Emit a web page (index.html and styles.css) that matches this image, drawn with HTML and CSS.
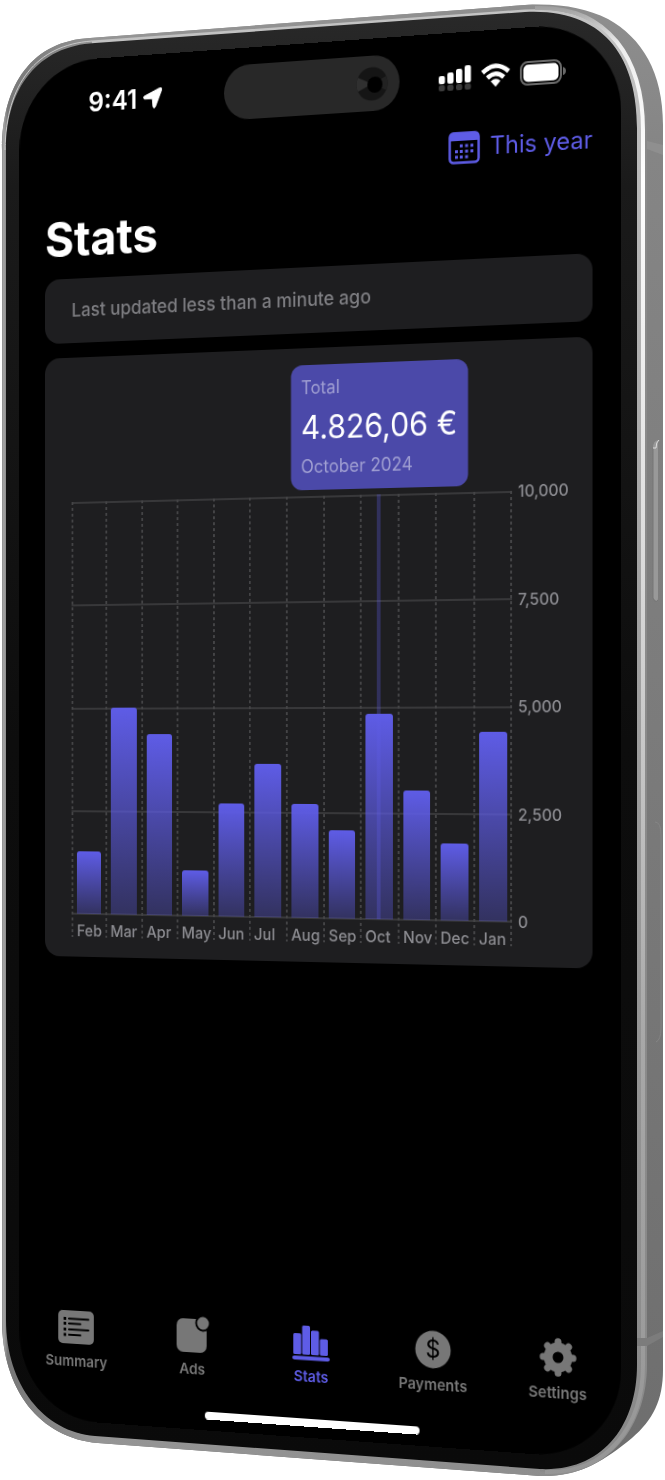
FILE: index.html
```html
<!DOCTYPE html>
<html lang="en">

<head>
    <meta charset="UTF-8">
    <meta name="viewport" content="width=device-width, initial-scale=1.0">
    <title>Stats</title>
    <link rel="stylesheet" href="styles.css">
</head>

<body>
    <div class="phone">
        <svg class="frame" viewBox="0 0 665 1480" preserveAspectRatio="none" aria-hidden="true">
            <defs>
                <linearGradient id="side" x1="0" y1="0" x2="0" y2="1">
                    <stop offset="0" stop-color="#8e8e8e" />
                    <stop offset=".1" stop-color="#858585" />
                    <stop offset="1" stop-color="#6e6e6e" />
                </linearGradient>
                <linearGradient id="metal" gradientUnits="userSpaceOnUse" x1="0" y1="0" x2="647" y2="0">
                    <stop offset="0" stop-color="#777" />
                    <stop offset=".006" stop-color="#a5a5a5" />
                    <stop offset=".012" stop-color="#777" />
                    <stop offset=".15" stop-color="#959595" />
                    <stop offset=".98" stop-color="#8c8c8c" />
                    <stop offset="1" stop-color="#8a8a8a" />
                </linearGradient>
                <linearGradient id="shine" gradientUnits="userSpaceOnUse" x1="0" y1="0" x2="0" y2="1480">
                    <stop offset="0" stop-color="#909090" />
                    <stop offset=".03" stop-color="#eeeeee" />
                    <stop offset=".12" stop-color="#ffffff" />
                    <stop offset=".4" stop-color="#d8d8d8" />
                    <stop offset=".7" stop-color="#a8a8a8" />
                    <stop offset="1" stop-color="#969696" />
                </linearGradient>
                <linearGradient id="lip" gradientUnits="userSpaceOnUse" x1="0" y1="0" x2="0" y2="1480">
                    <stop offset="0" stop-color="#c4c4c4" />
                    <stop offset=".4" stop-color="#a2a2a2" />
                    <stop offset="1" stop-color="#888888" />
                </linearGradient>
                <linearGradient id="glass" x1="0" y1="0" x2="0" y2="1">
                    <stop offset="0" stop-color="#292929" />
                    <stop offset=".12" stop-color="#1a1a1a" />
                    <stop offset=".5" stop-color="#0d0d0d" />
                    <stop offset="1" stop-color="#0a0a0a" />
                </linearGradient>
            </defs>
            <!-- body with the thick right side -->
            <path fill="url(#side)" d="M2 150C2 82 34 41 90 38L525 5C560 3 585 8 608 19C642 38 663 72 663 125V1370C663 1400 653 1420 632 1438C605 1460 580 1477 540 1476L98 1443C40 1438 2 1390 2 1320Z" />
            <!-- front rim -->
            <path fill="url(#metal)" d="M2 150C2 82 34 41 90 38L525 5C611 1 647 60 647 130V1365C647 1425 610 1478 540 1476L98 1443C40 1438 2 1390 2 1320Z" />
            <path fill="none" stroke="url(#lip)" stroke-width="5" d="M92 43L525 12C607 7 639 58 639 128V1365C639 1425 606 1472 540 1469" />
            <path fill="none" stroke="url(#shine)" stroke-width="4" d="M535 8C609 5 643 60 643 130V1365C643 1425 608 1474 545 1472" />
            <path fill="none" stroke="#c8c8c8" stroke-width="1" d="M5 150C6 84 36 45 92 41" />
            <path fill="url(#glass)" d="M6 150C6 88 38 46 95 43L525 12C605 8 637 58 637 128V1365C637 1424 604 1472 540 1469L95 1436C44 1432 6 1385 6 1320Z" />
            <!-- antenna bands and side buttons -->
            <path fill="#8f8f8f" d="M647 141L663 145V155L647 149Z" />
            <path fill="#7c7c7c" d="M637 1338H647L663 1331V1337L647 1346H637Z" />
            <path fill="#999" d="M653 448Q653 441 658 440V598Q658 604 653 598Z" />
            <path fill="none" stroke="#777" d="M653 448V598Q655 604 658 600" />
            <path fill="none" stroke="#ddd" d="M653 448H656Q656 442 659 440" />
            <path fill="none" stroke="#858585" d="M655 822Q661 822 661 835V1028Q661 1040 656 1042" />
        </svg>

        <div class="screen">
            <div class="status-bar">
                <div class="clock">
                    <span>9:41</span>
                    <svg width="21" height="21" viewBox="0 0 21 21"><path fill="#fff" d="M18.500 .4Q20.800 -.3 20.600 2.500L13.500 19.500Q12.300 21.500 11 19.500L10.300 11.800Q10.100 11 9.300 10.900L1.500 10.800Q-.6 9.500 1.200 8Z" stroke="#fff" stroke-width="1" stroke-linejoin="round" /></svg>
                </div>
                <div class="island">
                    <svg width="34" height="36" viewBox="0 0 34 36">
                        <circle cx="17" cy="18" r="16.500" fill="#151515" />
                        <path d="M17 18L2 11A17 17 0 0 0 2 25Z" fill="#303030" />
                        <path d="M17 18L32 11A17 17 0 0 1 32 25Z" fill="#222222" />
                        <circle cx="20" cy="19" r="8" fill="#000" />
                    </svg>
                </div>
                <div class="indicators">
                    <svg width="34" height="27" viewBox="0 0 34 27">
                        <g fill="#fff">
                            <rect x="0" y="11" width="6.500" height="8" rx="2" />
                            <rect x="9" y="8" width="6.500" height="11" rx="2" />
                            <rect x="18" y="5" width="6.500" height="14" rx="2" />
                            <rect x="27" y="2" width="6.500" height="17" rx="2" />
                        </g>
                        <g fill="#3c3c3c">
                            <rect x="0" y="20" width="6.500" height="6" rx="2" />
                            <rect x="9" y="20" width="6.500" height="6" rx="2" />
                            <rect x="18" y="20" width="6.500" height="6" rx="2" />
                            <rect x="27" y="20" width="6.500" height="6" rx="2" />
                        </g>
                    </svg>
                    <svg width="30" height="23" viewBox="0 0 30 23">
                        <g fill="none" stroke="#fff" stroke-width="4.500">
                            <path d="M1.500 8.500Q15-3.500 28.500 8.500" />
                            <path d="M6.500 14Q15 6.500 23.500 14" />
                        </g>
                        <path fill="#fff" d="M10 17.500Q15 13 20 17.500L15 23Z" />
                    </svg>
                    <svg width="47" height="24" viewBox="0 0 47 24">
                        <rect x="1" y="1" width="41" height="22" rx="7" fill="none" stroke="#6a6a6a" stroke-width="2" />
                        <rect x="3.500" y="3.500" width="36" height="17" rx="5" fill="#fff" />
                        <path d="M44 8Q47 9 47 12T44 16Z" fill="#6a6a6a" />
                    </svg>
                </div>
            </div>

            <header class="toolbar">
                <button class="period" type="button">
                    <svg width="33" height="32" viewBox="0 0 33 32">
                        <rect x="1.500" y="1.500" width="30" height="29" rx="4" fill="none" stroke="#5e5ce6" stroke-width="2.500" />
                        <path d="M1 9V5Q1 .5 5 .5H28Q32 .5 32 5V9Z" fill="#5e5ce6" />
                        <g fill="#5e5ce6">
                            <path d="M12 12.500h3v3h-3zM17.500 12.500h3v3h-3zM23 12.500h3v3h-3z" />
                            <path d="M7 18h3v3h-3zM12 18h3v3h-3zM17.500 18h3v3h-3zM23 18h3v3h-3z" />
                            <path d="M7 23.500h3v3h-3zM12 23.500h3v3h-3zM17.500 23.500h3v3h-3z" />
                        </g>
                    </svg>
                    This year
                </button>
            </header>

            <main>
                <h1>Stats</h1>
                <p class="card updated">Last updated less than a minute ago</p>

                <section class="card chart">
                    <div class="plot">
                        <div class="lines"><i></i><i></i><i></i><i></i><i></i></div>
                        <div class="months">
                            <div class="month"><div class="track"><div class="bar" style="height: 15.2%"></div></div><span>Feb</span></div>
                            <div class="month"><div class="track"><div class="bar" style="height: 49.9%"></div></div><span>Mar</span></div>
                            <div class="month"><div class="track"><div class="bar" style="height: 43.6%"></div></div><span>Apr</span></div>
                            <div class="month"><div class="track"><div class="bar" style="height: 10.9%"></div></div><span>May</span></div>
                            <div class="month"><div class="track"><div class="bar" style="height: 27.1%"></div></div><span>Jun</span></div>
                            <div class="month"><div class="track"><div class="bar" style="height: 36.5%"></div></div><span>Jul</span></div>
                            <div class="month"><div class="track"><div class="bar" style="height: 27%"></div></div><span>Aug</span></div>
                            <div class="month"><div class="track"><div class="bar" style="height: 20.8%"></div></div><span>Sep</span></div>
                            <div class="month selected">
                                <div class="track"><div class="bar" style="height: 48.3%"></div></div><span>Oct</span>
                                <div class="tooltip">
                                    <small>Total</small>
                                    <strong>4.826,06 €</strong>
                                    <small>October 2024</small>
                                </div>
                            </div>
                            <div class="month"><div class="track"><div class="bar" style="height: 30.3%"></div></div><span>Nov</span></div>
                            <div class="month"><div class="track"><div class="bar" style="height: 17.9%"></div></div><span>Dec</span></div>
                            <div class="month"><div class="track"><div class="bar" style="height: 44%"></div></div><span>Jan</span></div>
                        </div>
                    </div>
                    <div class="scale">
                        <span>10,000</span>
                        <span>7,500</span>
                        <span>5,000</span>
                        <span>2,500</span>
                        <span>0</span>
                    </div>
                </section>
            </main>

            <nav class="tabs">
                <a href="#summary">
                    <svg width="42" height="38" viewBox="0 0 42 38">
                        <rect x="1" y="2" width="40" height="34" rx="5" fill="currentColor" />
                        <path d="M13 10.500H35M13 15.500H26M13 21.500H35M13 27H26" stroke="#000" stroke-width="2" stroke-linecap="round" />
                        <path d="M7 10.500h3M7 15.500h3M7 21.500h3M7 27h3" stroke="#000" stroke-width="3" />
                    </svg>
                    Summary
                </a>
                <a href="#ads">
                    <svg width="42" height="38" viewBox="0 0 42 38">
                        <rect x="4" y="3" width="33" height="34" rx="7" fill="currentColor" />
                        <circle cx="33" cy="7" r="7.500" fill="currentColor" stroke="#000" stroke-width="2" />
                    </svg>
                    Ads
                </a>
                <a href="#stats" class="active">
                    <svg width="42" height="38" viewBox="0 0 42 38">
                        <g fill="currentColor">
                            <rect x="2" y="11" width="8.500" height="21" rx="1.500" />
                            <rect x="11.500" y="3" width="8.500" height="29" rx="1.500" />
                            <rect x="21" y="7.500" width="8.500" height="24.500" rx="1.500" />
                            <rect x="30.500" y="15.500" width="8.500" height="16.500" rx="1.500" />
                            <rect x="1" y="33.500" width="40" height="4" rx="2" />
                        </g>
                    </svg>
                    Stats
                </a>
                <a href="#payments">
                    <svg width="42" height="38" viewBox="0 0 42 38">
                        <circle cx="21" cy="19" r="18.500" fill="currentColor" />
                        <text x="21" y="27" text-anchor="middle" class="dollar">$</text>
                    </svg>
                    Payments
                </a>
                <a href="#settings">
                    <svg width="42" height="38" viewBox="0 0 42 38">
                        <circle cx="21" cy="19" r="10" fill="none" stroke="currentColor" stroke-width="9" />
                        <g stroke="currentColor" stroke-width="7" stroke-linecap="round">
                            <path d="M21 7V3.800M21 31V34.200M9 19H5.800M33 19H36.200M12.500 10.500L10.300 8.300M29.500 10.500L31.700 8.300M12.500 27.500L10.300 29.700M29.500 27.500L31.700 29.700" />
                        </g>
                    </svg>
                    Settings
                </a>
            </nav>
            <div class="home-bar"></div>
        </div>
    </div>
</body>

</html>
```
FILE: styles.css
```css
* {
    box-sizing: border-box;
}

body {
    font-family: Inter, "Liberation Sans", sans-serif;
    background-color: #ffffff;
    margin: 0;
}

.phone {
    position: relative;
    display: flex;
    max-width: 720px;
    min-height: 100vh;
    margin: 0 auto;
    padding: 43px 0 42px;
    overflow: hidden;
}

.frame {
    position: absolute;
    inset: 0;
    width: 100%;
    height: 100%;
}

/* the device stands turned to the left, right edge nearer */
.screen {
    flex: 1;
    display: flex;
    flex-direction: column;
    min-width: 0;
    margin: 0 32px 0 -11px;
    padding: 17px 0 11px;
    border-radius: 88px;
    background: #000;
    color: #fff;
    transform: perspective(3700px) rotateY(-21deg);
}

.status-bar {
    display: grid;
    grid-template-columns: 1fr 188px 1fr;
    align-items: center;
}

.clock {
    display: flex;
    align-items: center;
    gap: 7px;
    padding-left: 78px;
    font-size: 27px;
    font-weight: 600;
    line-height: 32px;
}

.island {
    display: flex;
    align-items: center;
    justify-content: flex-end;
    height: 55px;
    padding-right: 12px;
    border-radius: 28px;
    background: #282828;
}

.indicators {
    display: flex;
    align-items: center;
    justify-content: flex-end;
    gap: 10px;
    padding-right: 56px;
}

.toolbar {
    display: flex;
    justify-content: flex-end;
    margin-top: 26px;
    padding: 0 29px;
}

.period {
    display: flex;
    align-items: center;
    gap: 10px;
    padding: 0;
    border: none;
    background: none;
    color: #5e5ce6;
    font-family: inherit;
    font-size: 24px;
    line-height: 32px;
    cursor: pointer;
}

main {
    flex: 1;
    padding: 0 29px;
}

h1 {
    margin: 25px 0 13px;
    font-size: 50px;
    line-height: 56px;
}

.card {
    margin: 0 0 15px;
    border-radius: 16px;
    background: #1e1e20;
}

.updated {
    padding: 20px 30px;
    color: #7e7e82;
    font-size: 19px;
    font-weight: 500;
    line-height: 26px;
}

.chart {
    display: flex;
    align-items: flex-start;
    padding: 148px 0 20px 30px;
    color: #8c8c91;
    font-size: 16px;
    font-weight: 500;
}

.plot {
    flex: 1;
    display: grid;
}

.lines,
.months {
    grid-area: 1 / 1;
}

.lines {
    display: flex;
    flex-direction: column;
    justify-content: space-between;
    height: 423px;
}

.lines i {
    height: 2px;
    background: #38383a;
}

.months {
    display: grid;
    grid-template-columns: 29fr 31fr 30fr 31fr 30fr 31fr 31fr 30fr 31fr 30fr 31fr 31fr;
}

.month {
    position: relative;
    min-width: 0;
    padding: 0 5px 0 6px;
    background: repeating-linear-gradient(#444446 0 3px, transparent 3px 6px) left / 2px 100% no-repeat;
}

.month:last-child {
    background:
        repeating-linear-gradient(#444446 0 3px, transparent 3px 6px) left / 2px 100% no-repeat,
        repeating-linear-gradient(#444446 0 3px, transparent 3px 6px) right / 2px 100% no-repeat;
}

.month span {
    display: block;
    height: 24px;
    padding-top: 5px;
    line-height: 24px;
    white-space: nowrap;
}

.track {
    display: flex;
    align-items: flex-end;
    height: 422px;
}

.bar {
    width: 100%;
    border-radius: 3px 3px 0 0;
    background: linear-gradient(#5e5ce6, rgba(94, 92, 230, 0.32));
}

.selected .track {
    background: linear-gradient(rgba(94, 92, 230, 0.3), rgba(94, 92, 230, 0.3)) center / 4px 100% no-repeat;
}

.tooltip {
    position: absolute;
    bottom: 100%;
    left: 50%;
    display: flex;
    flex-direction: column;
    margin-bottom: 6px;
    padding: 10px 11px;
    border-radius: 12px;
    background: #4b49a9;
    transform: translateX(-50%);
    white-space: nowrap;
}

.tooltip small {
    color: #a09fd2;
    font-size: 18px;
    font-weight: 400;
    line-height: 26px;
}

.tooltip strong {
    color: #fff;
    font-size: 32px;
    font-weight: 400;
    line-height: 53px;
}

.scale {
    display: flex;
    flex-direction: column;
    justify-content: space-between;
    width: 82px;
    height: 442px;
    margin-top: -10px;
    padding-left: 6px;
    line-height: 20px;
}

.tabs {
    display: grid;
    grid-template-columns: repeat(5, 1fr);
}

.tabs a {
    display: flex;
    flex-direction: column;
    align-items: center;
    gap: 6px;
    color: #777777;
    font-size: 15px;
    font-weight: 600;
    line-height: 20px;
    text-decoration: none;
}

.tabs .active {
    color: #5e5ce6;
}

.dollar {
    fill: #000;
    font-size: 24px;
    font-weight: 400;
}

.home-bar {
    width: 230px;
    height: 8px;
    margin: 32px auto 0;
    border-radius: 4px;
    background: #fff;
}
```
